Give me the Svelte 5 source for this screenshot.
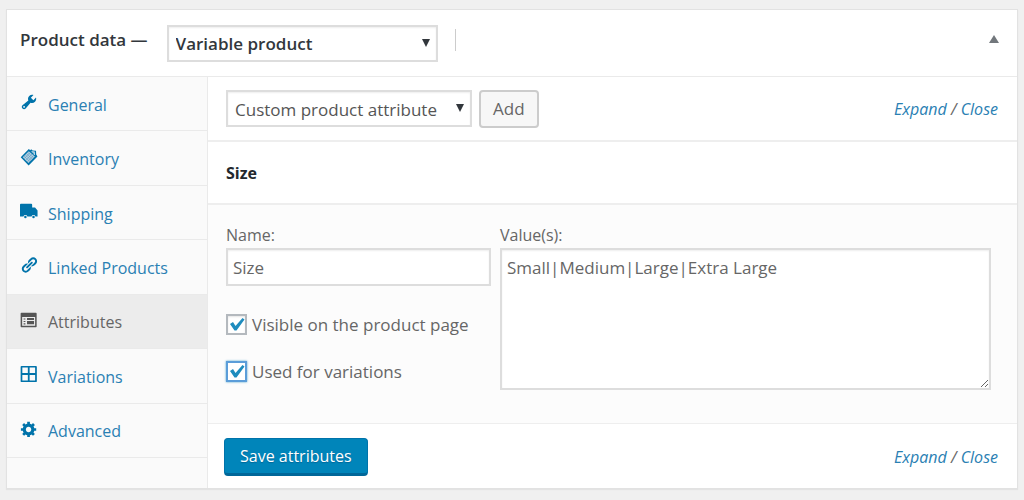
<script lang="ts">
	type Tab = { id: string; label: string };

	const tabs: Tab[] = [
		{ id: 'general', label: 'General' },
		{ id: 'inventory', label: 'Inventory' },
		{ id: 'shipping', label: 'Shipping' },
		{ id: 'linked', label: 'Linked Products' },
		{ id: 'attributes', label: 'Attributes' },
		{ id: 'variations', label: 'Variations' },
		{ id: 'advanced', label: 'Advanced' }
	];

	let active = $state('attributes');
	let name = $state('Size');
	let values = $state('Small|Medium|Large|Extra Large');
	let visible = $state(true);
	let variations = $state(true);
</script>

{#snippet icon(id: string)}
	<svg class="icon" viewBox="0 0 20 20" aria-hidden="true">
		{#if id === 'general'}
			<path
				d="M16.68 9.77c-1.34 1.34-3.3 1.67-4.95.99l-5.41 6.52c-.99.99-2.59.99-3.58 0s-.99-2.59 0-3.57l6.52-5.42c-.68-1.65-.35-3.61.99-4.95 1.28-1.28 3.12-1.62 4.72-1.06l-2.89 2.89 2.82 2.82 2.86-2.87c.53 1.58.18 3.39-1.08 4.65zM3.81 16.21c.4.39 1.04.39 1.43 0 .4-.4.4-1.04 0-1.43-.39-.4-1.03-.4-1.43 0-.39.39-.39 1.03 0 1.43z"
			/>
		{:else if id === 'inventory'}
			<path d="M.8 10.4 9.8 1.2l1.6 1.3 1-1 1.6 1.4 3.8.2.2 4.2 1.4 2.1-9.8 10z" />
			<path d="M3 10.4 9.8 3.5l6.7 6-7.1 7.3z" fill="#b4d0e1" />
			<path
				d="m4.4 9 6.6 6.2M5.8 7.6l6.6 6.2M7.2 6.2l6.6 6.2M8.6 4.8l6.6 6.2M11.4 5 4.4 12M13.4 6.6 6.2 14M15.2 8.2 8 15.6"
				fill="none"
				stroke="#4a90ba"
				stroke-width=".5"
			/>
			<path d="m12.5 3.7 3.8.3.3 4-1.6-1 .1-1.9-1.7-.1z" fill="#e3eef5" />
		{:else if id === 'shipping'}
			<path
				d="M1 2h11.500a1 1 0 0 1 1 1v3h3.200l2.800 3.500V16h-2.300a2.3 2.3 0 0 0-4.4 0H8.2a2.3 2.3 0 0 0-4.4 0H0V3a1 1 0 0 1 1-1z"
			/>
			<circle cx="6" cy="16.6" r="1.4" />
			<circle cx="15" cy="16.6" r="1.4" />
		{:else if id === 'linked'}
			<path
				d="M17.74 2.76c1.68 1.69 1.68 4.41 0 6.1l-1.53 1.52c-1.12 1.12-2.7 1.47-4.14 1.09l2.62-2.61.76-.77.76-.76c.84-.84.84-2.2 0-3.04-.84-.85-2.2-.85-3.04 0l-.77.76-3.38 3.38c-.37-1.44-.02-3.02 1.1-4.14l1.52-1.53c1.69-1.68 4.42-1.68 6.1 0zM8.59 13.43l5.34-5.34c.42-.42.42-1.1 0-1.52-.44-.43-1.13-.39-1.53 0l-5.33 5.34c-.42.42-.42 1.1 0 1.52.44.43 1.13.39 1.52 0zm-.76 2.29l4.14-4.15c.38 1.44.03 3.02-1.09 4.14l-1.52 1.53c-1.69 1.68-4.41 1.68-6.1 0-1.68-1.68-1.68-4.42 0-6.1l1.53-1.52c1.12-1.12 2.7-1.47 4.14-1.1l-4.14 4.15c-.85.84-.85 2.2 0 3.05.84.84 2.2.84 3.04 0z"
			/>
		{:else if id === 'attributes'}
			<path
				fill-rule="evenodd"
				d="M1.6 2h16a.9.9 0 0 1 .9.9v14.2a.9.9 0 0 1-.9.9h-16a.9.9 0 0 1-.9-.9V2.9a.9.9 0 0 1 .9-.9zM2.4 6.6v9.800h14.400V6.600zM4 8.200h2v1.300H4zm0 2.800h2v1.300H4zm0 2.700h2v1.300H4zM7.800 7.900H15.600v2.100H7.800zm0 3.300H15.600v3.600H7.800z"
			/>
		{:else if id === 'variations'}
			<path
				fill-rule="evenodd"
				d="M1.7 1h16a1 1 0 0 1 1 1v16a1 1 0 0 1-1 1h-16a1 1 0 0 1-1-1V2a1 1 0 0 1 1-1zM2.6 2.9V9h6.100V2.900zM10.700 2.900V9h6.100V2.900zM2.600 11v6.100h6.100V11zM10.700 11v6.100h6.100V11z"
			/>
		{:else}
			<path
				d="M18 12h-2.18c-.17.7-.44 1.35-.81 1.93l1.54 1.54-2.1 2.1-1.54-1.54c-.58.36-1.23.63-1.91.79V19H8v-2.18c-.68-.16-1.33-.43-1.91-.79l-1.54 1.54-2.12-2.12 1.54-1.54c-.36-.58-.63-1.23-.79-1.91H1V9.03h2.17c.16-.7.44-1.35.8-1.94L2.43 5.55l2.1-2.1 1.54 1.54c.58-.37 1.24-.64 1.93-.81V2h3v2.18c.68.16 1.33.43 1.91.79l1.54-1.54 2.12 2.12-1.54 1.54c.36.59.64 1.24.8 1.94H18V12zm-8.5 1.5c1.66 0 3-1.34 3-3s-1.34-3-3-3-3 1.34-3 3 1.34 3 3 3z"
			/>
		{/if}
	</svg>
{/snippet}

{#snippet arrow()}
	<svg class="arrow" viewBox="0 0 8 8" aria-hidden="true"><path d="M0 0h8L4 8z" /></svg>
{/snippet}

{#snippet expandClose()}
	<span class="expand-close"><a href="#expand">Expand</a> / <a href="#close">Close</a></span>
{/snippet}

<section class="postbox">
	<header>
		<label class="title" for="product-type">Product data —</label>
		<div class="select type">
			<select id="product-type">
				<option>Variable product</option>
				<option>Simple product</option>
			</select>
			{@render arrow()}
		</div>
		<span class="divider"></span>
		<button class="toggle" type="button" aria-label="Toggle panel">
			<svg viewBox="0 0 10 8" aria-hidden="true"><path d="M5 0l5 8H0z" /></svg>
		</button>
	</header>

	<div class="inside">
		<nav>
			<ul>
				{#each tabs as tab}
					<li class:active={active === tab.id}>
						<a href="#{tab.id}" onclick={() => (active = tab.id)}>
							{@render icon(tab.id)}
							<span>{tab.label}</span>
						</a>
					</li>
				{/each}
			</ul>
		</nav>

		<div class="panel">
			<div class="toolbar top">
				<div class="select taxonomy">
					<select aria-label="Attribute type">
						<option>Custom product attribute</option>
					</select>
					{@render arrow()}
				</div>
				<button class="button" type="button">Add</button>
				{@render expandClose()}
			</div>

			<h3>{name}</h3>

			<div class="attribute">
				<div class="field">
					<label for="attr-name">Name:</label>
					<input id="attr-name" type="text" bind:value={name} />
					<label class="check">
						<input type="checkbox" bind:checked={visible} />
						Visible on the product page
					</label>
					<label class="check">
						<input class="focused" type="checkbox" bind:checked={variations} />
						Used for variations
					</label>
				</div>
				<div class="field">
					<label for="attr-values">Value(s):</label>
					<textarea id="attr-values" bind:value={values}></textarea>
				</div>
			</div>

			<div class="toolbar bottom">
				<button class="button primary" type="button">Save attributes</button>
				{@render expandClose()}
			</div>
		</div>
	</div>
</section>

<style>
	:global(body) {
		background: #f0f0f0;
		color: #666;
		font-family: 'Segoe UI', 'Open Sans', 'Noto Sans', sans-serif;
		font-size: 17px;
		line-height: 24px;
	}

	.postbox,
	.postbox * {
		box-sizing: border-box;
	}
	.postbox {
		margin: 9px 6px 11px;
		background: #fff;
		border: 1px solid #e2e2e2;
		box-shadow: 0 1px 1px rgba(0, 0, 0, 0.05);
	}

	a {
		color: #2a80b3;
		text-decoration: none;
	}
	button,
	input,
	select,
	textarea {
		margin: 0;
		font: inherit;
		color: inherit;
	}

	header {
		display: flex;
		align-items: center;
		height: 67px;
		padding: 0 18px 0 13px;
		border-bottom: 1px solid #eaeaea;
		color: #32373c;
		font-weight: 600;
	}
	.title {
		padding-bottom: 6px;
	}
	.divider {
		width: 1px;
		height: 22px;
		margin: 0 auto 6px 17px;
		background: #ccc;
	}
	.toggle {
		display: flex;
		padding: 0;
		margin-bottom: 8px;
		border: 0;
		background: none;
	}
	.toggle svg {
		width: 10px;
		height: 8px;
		fill: #72777c;
	}

	.select {
		position: relative;
		height: 37px;
	}
	.select select {
		width: 100%;
		height: 100%;
		padding: 2px 7px 0;
		border: 2px solid #ddd;
		border-radius: 0;
		background: #fff;
		box-shadow: inset 0 1px 2px rgba(0, 0, 0, 0.07);
		appearance: none;
	}
	.arrow {
		position: absolute;
		right: 8px;
		top: 14px;
		width: 8px;
		height: 8px;
		fill: #32373c;
		pointer-events: none;
	}
	.type {
		width: 271px;
		margin-left: 19px;
	}
	.taxonomy {
		width: 246px;
		color: #555;
	}

	.inside {
		display: grid;
		grid-template-columns: 201px 1fr;
	}

	nav {
		display: flex;
		padding-bottom: 30px;
		background: #fafafa;
		border-right: 1px solid #eaeaea;
		font-size: 16px;
	}
	ul {
		display: flex;
		flex: 1;
		flex-direction: column;
		margin: 0;
		padding: 0;
		list-style: none;
	}
	li {
		display: flex;
		flex: 1;
		border-bottom: 1px solid #eaeaea;
	}
	li a {
		display: flex;
		flex: 1;
		align-items: center;
		gap: 10px;
		padding: 2px 13px 0;
	}
	li.active {
		background: #ececec;
	}
	li.active a {
		color: #666;
	}
	.icon {
		width: 18px;
		height: 18px;
		margin-bottom: 5px;
		fill: #0073aa;
	}
	.active .icon {
		fill: #555;
	}

	.panel {
		display: flex;
		flex-direction: column;
	}
	.toolbar {
		display: flex;
		align-items: center;
		gap: 7px;
		height: 65px;
		padding: 0 19px 0 18px;
	}
	.top {
		border-bottom: 2px solid #eee;
	}
	.bottom {
		padding-top: 2px;
		padding-left: 16px;
		border-top: 1px solid #eee;
	}
	.expand-close {
		margin-left: auto;
		font-size: 16px;
		font-style: italic;
	}
	.button {
		height: 38px;
		padding: 0 12px;
		border: 2px solid #ccc;
		border-radius: 4px;
		background: #f7f7f7;
	}
	.primary {
		padding: 0 15px;
		border: 1px solid #0073aa;
		border-bottom: 3px solid #006799;
		background: #0085ba;
		color: #fff;
		font-size: 16px;
		text-shadow: 0 1px 1px #006799;
	}

	h3 {
		display: flex;
		align-items: center;
		height: 63px;
		margin: 0;
		padding: 0 18px;
		border-bottom: 2px solid #eee;
		color: #23282d;
		font-size: 16px;
		font-weight: 700;
	}

	.attribute {
		display: grid;
		grid-template-columns: 265px 1fr;
		gap: 9px;
		padding: 18px 26px 28px 18px;
		background: #fcfcfc;
	}
	.field {
		display: flex;
		flex-direction: column;
		font-size: 16px;
	}
	.field > input,
	textarea {
		border: 2px solid #ddd;
		border-radius: 0;
		background: #fff;
		box-shadow: inset 0 1px 2px rgba(0, 0, 0, 0.07);
		font-size: 17px;
		outline: 0;
	}
	.field > input {
		height: 38px;
		margin: 1px 0 15px;
		padding: 0 5px;
	}
	textarea {
		height: 142px;
		margin-top: 1px;
		padding: 6px 5px;
		resize: vertical;
	}

	.check {
		display: flex;
		align-items: center;
		gap: 5px;
		height: 47px;
		font-size: 17px;
	}
	.check input {
		width: 21px;
		height: 21px;
		border: 2px solid #b4b9be;
		background: #fff;
		box-shadow: inset 0 1px 2px rgba(0, 0, 0, 0.1);
		appearance: none;
	}
	.check input:checked {
		background: #fff
			url("data:image/svg+xml,%3Csvg xmlns='http://www.w3.org/2000/svg' viewBox='0 0 17 17'%3E%3Cpath d='M2 8l3-2 2.500 4L14.500 2l2 1.500L8.500 14.500H6.500z' fill='%231e8cbe'/%3E%3C/svg%3E")
			center / 17px no-repeat;
	}
	.check .focused {
		border-color: #5b9dd9;
		box-shadow: 0 0 2px rgba(30, 140, 190, 0.8);
	}
</style>
